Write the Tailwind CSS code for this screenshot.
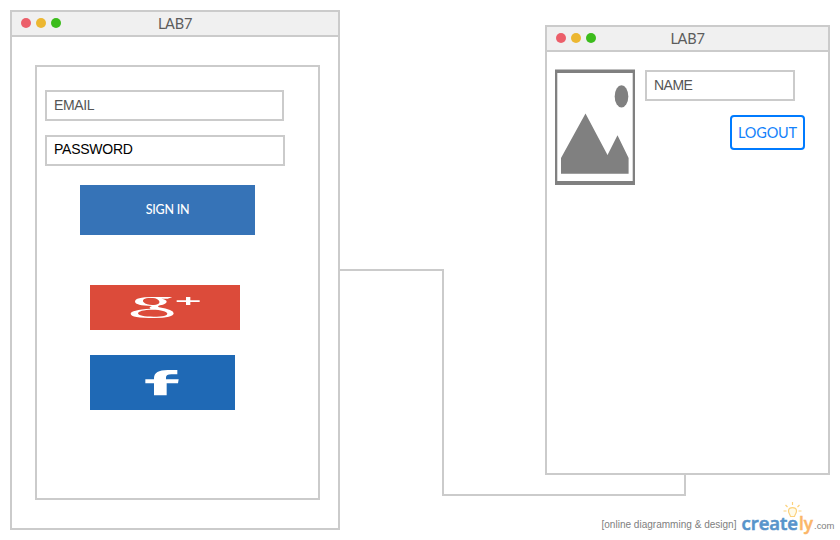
<!DOCTYPE html>
<html lang="en">
<head>
<meta charset="utf-8">
<title>LAB7</title>
<script src="https://cdn.jsdelivr.net/npm/@tailwindcss/browser@4"></script>
</head>
<body class="bg-white">
<main class="relative h-[540px] w-[840px] overflow-hidden bg-white font-['Lato',sans-serif]">

  <!-- connector between the two windows -->
  <svg class="absolute inset-0" width="840" height="540" fill="none" stroke="#cbcbcb" stroke-width="2"><path d="M339 270H443V495H685V474"/></svg>

  <!-- sign-in window -->
  <section class="absolute left-[10px] top-[10px] flex h-[520px] w-[330px] flex-col border-2 border-[#cbcbcb] bg-white">
    <header class="relative flex h-[25px] shrink-0 items-center justify-center border-b-2 border-[#cbcbcb] bg-[#f0f0f0]">
      <div class="absolute left-[9px] top-[6px] flex gap-[5px]">
        <i class="size-[10px] rounded-full bg-[#ec5f6a]"></i><i class="size-[10px] rounded-full bg-[#ecb731]"></i><i class="size-[10px] rounded-full bg-[#3cbc1c]"></i>
      </div>
      <h1 class="pt-[2px] text-[14.5px] leading-none tracking-[-0.2px] text-[#5c5c5c]">LAB7</h1>
    </header>
    <form class="ml-[23px] mt-[28px] flex h-[435px] w-[285px] flex-col items-start border-2 border-[#cbcbcb] pl-2 pt-[23px]">
      <div class="h-[31px] w-[239px] border-2 border-[#cbcbcb] pl-[7px] pt-[5px] font-['Liberation_Sans',sans-serif] text-[14px] leading-4 tracking-[-0.35px] text-[#555]">EMAIL</div>
      <div class="mt-[14px] h-[31px] w-[240px] border-2 border-[#cbcbcb] pl-[7px] pt-1 font-['Liberation_Sans',sans-serif] text-[14px] leading-4 tracking-[-0.25px] text-black">PASSWORD</div>
      <div class="ml-[35px] mt-[19px] flex h-[50px] w-[175px] items-center justify-center bg-[#3673b7] text-[12.5px] font-medium tracking-[-0.25px] text-white">SIGN IN</div>
      <div class="ml-[45px] mt-[50px] h-[45px] w-[150px] bg-[#dc4b3a]">
        <svg width="150" height="45" viewBox="0 0 450 135" fill="#fff">
          <path fill-rule="evenodd" d="M187 36H247L233 41H214Q230 44 230 50Q230 57 210 61Q200 64 207 67Q251 74 251 85Q251 99 192 99Q122 99 122 86Q122 75 182 71Q174 67 186 63Q135 61 135 50Q135 36 187 36ZM181 39C162 39 155 45 161 52C167 59 180 61 192 60C210 59 211 50 205 45C200 40 192 39 181 39ZM188 74C160 74 144 79 144 85C144 92 163 95 191 95C219 95 232 91 232 86C232 79 212 74 188 74Z"/>
          <path d="M288 36H301V46H329V51H301V60H288V51H260V46H288Z"/>
        </svg>
      </div>
      <div class="ml-[45px] mt-[25px] h-[55px] w-[145px] bg-[#1f69b5]">
        <svg width="145" height="55" viewBox="0 0 435 165" fill="#fff"><path d="M192 121V85H166V73H192V69Q192 45 233 45H262V58H244Q228 58 228 67V73H266L264 85H230V121Z"/></svg>
      </div>
    </form>
  </section>

  <!-- profile window -->
  <section class="absolute left-[545px] top-[25px] flex h-[450px] w-[285px] flex-col border-2 border-[#cbcbcb] bg-white">
    <header class="relative flex h-[25px] shrink-0 items-center justify-center border-b-2 border-[#cbcbcb] bg-[#f0f0f0]">
      <div class="absolute left-[9px] top-[6px] flex gap-[5px]">
        <i class="size-[10px] rounded-full bg-[#ec5f6a]"></i><i class="size-[10px] rounded-full bg-[#ecb731]"></i><i class="size-[10px] rounded-full bg-[#3cbc1c]"></i>
      </div>
      <h1 class="pt-[2px] text-[14.5px] leading-none tracking-[-0.2px] text-[#5c5c5c]">LAB7</h1>
    </header>
    <div class="flex gap-[10px] pl-2 pt-[17px]">
      <svg class="shrink-0" width="80" height="116" fill="#808080"><path fill-rule="evenodd" d="M0 .4H80V116H0ZM2.300 4V112H77.700V4Z"/><ellipse cx="66.5" cy="27.4" rx="6.8" ry="11.2"/><path d="M6 104.800V89L30.500 44.500L52.500 86L62.500 66.300L73.600 89V104.800Z"/></svg>
      <div class="flex w-[160px] flex-col pt-px">
        <div class="h-[31px] w-[150px] border-2 border-[#cbcbcb] pl-[7px] pt-[5px] font-['Liberation_Sans',sans-serif] text-[14px] leading-4 tracking-[-0.5px] text-[#555]">NAME</div>
        <div class="mt-[14px] flex h-[35px] w-[75px] items-center justify-center self-end rounded-[4px] border-2 border-[#007bff] text-[14.5px] tracking-[-0.2px] text-[#1482fb]">LOGOUT</div>
      </div>
    </div>
  </section>

  <!-- attribution -->
  <svg class="absolute left-[590px] top-[495px]" width="250" height="45">
    <text x="11.5" y="33" textLength="135" lengthAdjust="spacingAndGlyphs" font-family="Liberation Sans, sans-serif" font-size="10" fill="#808080">[online diagramming &amp; design]</text>
    <g font-family="Open Sans, sans-serif" font-weight="600" font-size="18.4">
      <text x="151.5" y="35" textLength="56.5" lengthAdjust="spacingAndGlyphs" fill="#5794cb" stroke="#5794cb" stroke-width=".6">create</text>
      <text x="209" y="35" textLength="14" lengthAdjust="spacingAndGlyphs" fill="#fbb667" stroke="#fbb667" stroke-width=".5">ly</text>
    </g>
    <text x="224" y="34" textLength="20.5" lengthAdjust="spacingAndGlyphs" font-family="Liberation Sans, sans-serif" font-size="9.5" fill="#808080">.com</text>
    <g fill="none" stroke="#fcd27c" stroke-width="1.2">
      <path fill="#fffbe8" d="M200.500 21.500C200 19 198.500 18.500 198.500 16C198.500 11.500 206.500 11.500 206.500 16C206.500 18.500 205 19 204.500 21.500Z"/>
      <path d="M202.500 7V10M195.500 10L197.500 12M209.500 10L207.500 12M193.500 16H196.500M208.500 16H211.500"/>
    </g>
  </svg>
</main>
</body>
</html>
